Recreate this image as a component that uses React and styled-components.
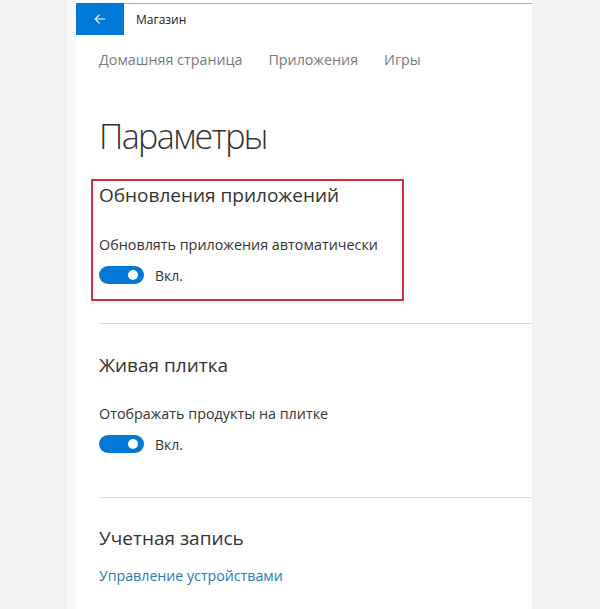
import React from 'react';
import styled, { createGlobalStyle } from 'styled-components';

const GlobalStyle = createGlobalStyle`
  html, body {
    margin: 0;
    padding: 0;
    background: #f2f2f2;
  }
  body {
    font-family: "Open Sans", "Noto Sans", sans-serif;
  }
`;

const Page = styled.div`
  width: 600px;
  height: 609px;
  display: flex;
  background: #f2f2f2;
  overflow: hidden;
`;

const Window = styled.div`
  margin-left: 67px;
  width: 465px;
  box-sizing: border-box;
  background: #fff;
  border-left: 9px solid #f9f9f9;
  display: flex;
  flex-direction: column;
`;

const TopEdge = styled.div`
  height: 3px;
`;

const TitleBar = styled.div`
  height: 32px;
  display: flex;
  align-items: center;
  border-top: 1px solid #8db3d2;
  box-sizing: border-box;
`;

const BackButton = styled.button`
  width: 48px;
  height: 32px;
  margin-top: -1px;
  border: none;
  padding: 0;
  background: #0078d7;
  display: flex;
  align-items: center;
  justify-content: center;
  cursor: pointer;
`;

const AppName = styled.span`
  margin-left: 12px;
  font-size: 12px;
  color: #1a1a1a;
`;

const Content = styled.div`
  padding-left: 23px;
  display: flex;
  flex-direction: column;
`;

const Nav = styled.nav`
  margin-top: 15px;
  display: flex;
  gap: 26px;
  font-size: 14.3px;
  line-height: 20px;
  color: #7a7a7a;
`;

const PageTitle = styled.h1`
  margin: 44px 0 0;
  font-size: 34px;
  line-height: 44px;
  letter-spacing: -1.6px;
  font-weight: 300;
  color: #333;
`;

const Highlight = styled.div`
  margin: 21px 0 0 -8px;
  width: 313px;
  box-sizing: border-box;
  border: 2px solid #d5303d;
  padding: 2px 0 14px 6px;
`;

const SectionTitle = styled.h2`
  margin: ${(p) => p.$top || 0}px 0 0;
  font-size: 19px;
  line-height: 24px;
  font-weight: 400;
  color: #333;
`;

const Label = styled.div`
  margin-top: ${(p) => p.$top}px;
  font-size: 14.35px;
  line-height: 20px;
  color: #333;
`;

const ToggleRow = styled.div`
  margin-top: 10px;
  height: 20px;
  display: flex;
  align-items: center;
  gap: 11px;
`;

const Switch = styled.div`
  position: relative;
  width: 45px;
  height: 18px;
  border-radius: 9px;
  background: ${(p) => (p.$on ? '#0078d7' : '#fff')};

  &::after {
    content: '';
    position: absolute;
    top: 4px;
    right: 6px;
    width: 10px;
    height: 10px;
    border-radius: 50%;
    background: #fff;
  }
`;

const SwitchText = styled.span`
  font-size: 14px;
  color: #333;
`;

const Divider = styled.div`
  margin-top: ${(p) => p.$top}px;
  height: 1px;
  background: #dadada;
`;

const Link = styled.a`
  margin-top: 16px;
  font-size: 14.2px;
  line-height: 20px;
  color: #2a7ab8;
  text-decoration: none;
  cursor: pointer;
`;

const Toggle = ({ on, text }) => (
  <ToggleRow>
    <Switch $on={on} />
    <SwitchText>{text}</SwitchText>
  </ToggleRow>
);

export default function App() {
  return (
    <>
      <GlobalStyle />
      <Page>
        <Window>
          <TopEdge />
          <TitleBar>
            <BackButton aria-label="Назад">
              <svg width="14" height="14" viewBox="0 0 16 16" fill="none">
                <path
                  d="M14 8H2.5M7.5 3L2.5 8l5 5"
                  stroke="#fff"
                  strokeWidth="1.3"
                />
              </svg>
            </BackButton>
            <AppName>Магазин</AppName>
          </TitleBar>
          <Content>
            <Nav>
              <span>Домашняя страница</span>
              <span>Приложения</span>
              <span>Игры</span>
            </Nav>
            <PageTitle>Параметры</PageTitle>

            <Highlight>
              <SectionTitle>Обновления приложений</SectionTitle>
              <Label $top={28}>Обновлять приложения автоматически</Label>
              <Toggle on text="Вкл." />
            </Highlight>

            <Divider $top={22} />
            <SectionTitle $top={29}>Живая плитка</SectionTitle>
            <Label $top={27}>Отображать продукты на плитке</Label>
            <Toggle on text="Вкл." />

            <Divider $top={43} />
            <SectionTitle $top={28}>Учетная запись</SectionTitle>
            <Link>Управление устройствами</Link>
          </Content>
        </Window>
      </Page>
    </>
  );
}
